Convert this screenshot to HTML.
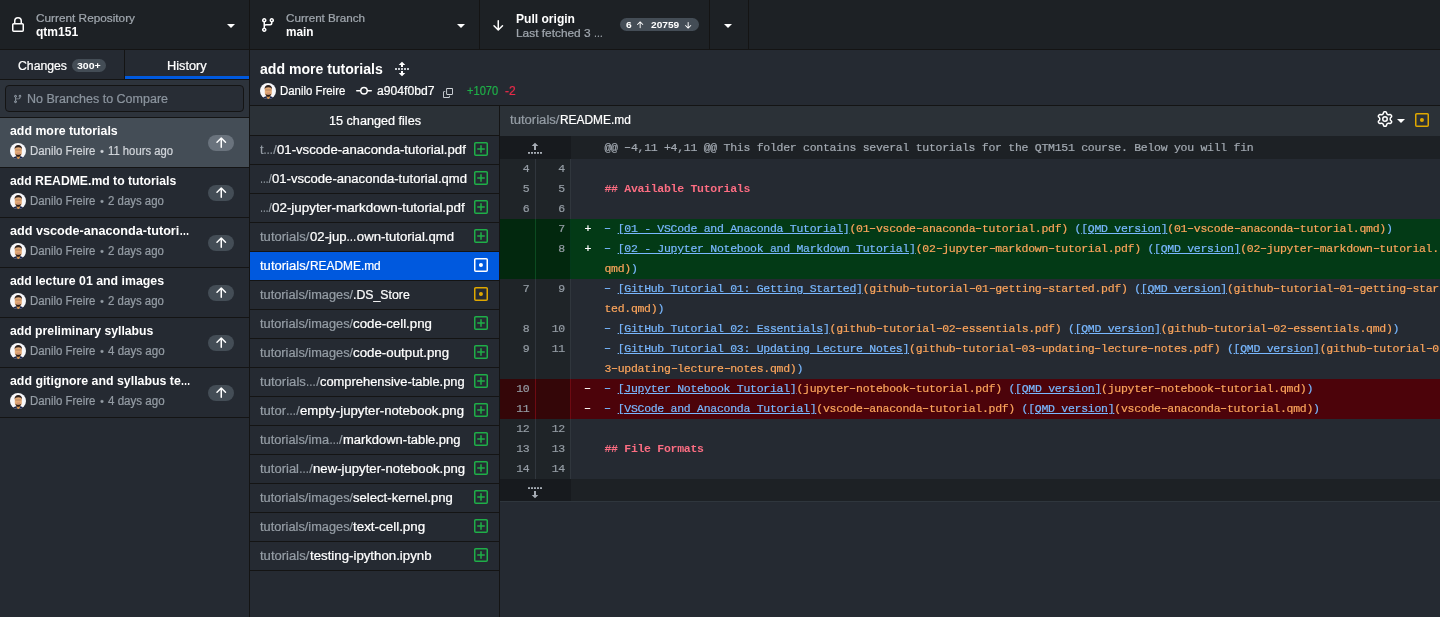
<!DOCTYPE html>
<html lang="en"><head><meta charset="utf-8"><title>GitHub Desktop</title>
<style>
html,body{margin:0;padding:0;background:#252a32;}
body{width:1440px;height:617px;overflow:hidden;position:relative;font-family:'Liberation Sans', sans-serif;}
#app{position:absolute;left:0;top:0;width:1440px;height:617px;will-change:transform;}
.r{position:absolute;display:block;}
.t{position:absolute;white-space:pre;-webkit-text-stroke:0.22px;}
.el{display:inline-block;transform:scaleX(0.78);transform-origin:0 50%;margin-right:-2.600px;}
.ln,.mk,.cd{position:absolute;white-space:pre;font:400 11.5px/20px 'Liberation Mono', monospace;letter-spacing:-0.279px;-webkit-text-stroke:0.2px;}
.ln{color:#959da5;text-align:right;}
.mk{color:#fff;}
.cd{color:#d1d5da;}
.lk{color:#79b8ff;text-decoration:underline;}
.st{color:#fca55c;}
.bl{color:#79b8ff;}
.hy{display:inline-block;transform:scaleX(1.600);position:relative;top:-1px;}
.hd{color:#fc6d82;font-weight:700;-webkit-text-stroke:0;}
</style></head>
<body>
<div id="app">
<div class="r" style="left:0px;top:0px;width:1440px;height:49px;background:#1d2125;"></div>
<div class="r" style="left:0px;top:49px;width:1440px;height:1px;background:#141414;"></div>
<div class="r" style="left:249px;top:0px;width:1px;height:49px;background:#141414;"></div>
<div class="r" style="left:479px;top:0px;width:1px;height:49px;background:#141414;"></div>
<div class="r" style="left:709px;top:0px;width:1px;height:49px;background:#141414;"></div>
<div class="r" style="left:748px;top:0px;width:1px;height:49px;background:#141414;"></div>
<div class="r" style="left:249px;top:50px;width:1px;height:567px;background:#141414;"></div>
<div class="r" style="left:124px;top:50px;width:1px;height:29px;background:#141414;"></div>
<div class="r" style="left:0px;top:79px;width:249px;height:1px;background:#141414;"></div>
<div class="r" style="left:125px;top:76px;width:124px;height:3px;background:#0059de;"></div>
<div class="r" style="left:0px;top:80px;width:249px;height:37px;background:#2d333b;"></div>
<div class="r" style="left:5px;top:85px;width:237px;height:25px;border:1px solid #141414;border-radius:4px;background:#282d35"></div>
<div class="r" style="left:0px;top:117px;width:249px;height:1px;background:#141414;"></div>
<div class="r" style="left:0px;top:118px;width:249px;height:49px;background:#444d56;"></div>
<div class="r" style="left:0px;top:167px;width:249px;height:1px;background:#141414;"></div>
<div class="r" style="left:208px;top:135px;width:26px;height:16px;border-radius:8px;background:#6a737d"></div>
<svg class="r" style="left:213.3px;top:135px" width="16" height="16" viewBox="0 0 16 16"><path fill="#fff" d="M3.47 7.78a.75.75 0 0 1 0-1.06l4.25-4.25a.75.75 0 0 1 1.06 0l4.25 4.25a.751.751 0 0 1-.018 1.042.751.751 0 0 1-1.042.018L9 4.81v7.44a.75.75 0 0 1-1.5 0V4.81L4.53 7.78a.75.75 0 0 1-1.06 0Z"/></svg>
<div class="r" style="left:0px;top:217px;width:249px;height:1px;background:#141414;"></div>
<div class="r" style="left:208px;top:185px;width:26px;height:16px;border-radius:8px;background:#444d56"></div>
<svg class="r" style="left:213.3px;top:185px" width="16" height="16" viewBox="0 0 16 16"><path fill="#fff" d="M3.47 7.78a.75.75 0 0 1 0-1.06l4.25-4.25a.75.75 0 0 1 1.06 0l4.25 4.25a.751.751 0 0 1-.018 1.042.751.751 0 0 1-1.042.018L9 4.81v7.44a.75.75 0 0 1-1.5 0V4.81L4.53 7.78a.75.75 0 0 1-1.06 0Z"/></svg>
<div class="r" style="left:0px;top:267px;width:249px;height:1px;background:#141414;"></div>
<div class="r" style="left:208px;top:235px;width:26px;height:16px;border-radius:8px;background:#444d56"></div>
<svg class="r" style="left:213.3px;top:235px" width="16" height="16" viewBox="0 0 16 16"><path fill="#fff" d="M3.47 7.78a.75.75 0 0 1 0-1.06l4.25-4.25a.75.75 0 0 1 1.06 0l4.25 4.25a.751.751 0 0 1-.018 1.042.751.751 0 0 1-1.042.018L9 4.81v7.44a.75.75 0 0 1-1.5 0V4.81L4.53 7.78a.75.75 0 0 1-1.06 0Z"/></svg>
<div class="r" style="left:0px;top:317px;width:249px;height:1px;background:#141414;"></div>
<div class="r" style="left:208px;top:285px;width:26px;height:16px;border-radius:8px;background:#444d56"></div>
<svg class="r" style="left:213.3px;top:285px" width="16" height="16" viewBox="0 0 16 16"><path fill="#fff" d="M3.47 7.78a.75.75 0 0 1 0-1.06l4.25-4.25a.75.75 0 0 1 1.06 0l4.25 4.25a.751.751 0 0 1-.018 1.042.751.751 0 0 1-1.042.018L9 4.81v7.44a.75.75 0 0 1-1.5 0V4.81L4.53 7.78a.75.75 0 0 1-1.06 0Z"/></svg>
<div class="r" style="left:0px;top:367px;width:249px;height:1px;background:#141414;"></div>
<div class="r" style="left:208px;top:335px;width:26px;height:16px;border-radius:8px;background:#444d56"></div>
<svg class="r" style="left:213.3px;top:335px" width="16" height="16" viewBox="0 0 16 16"><path fill="#fff" d="M3.47 7.78a.75.75 0 0 1 0-1.06l4.25-4.25a.75.75 0 0 1 1.06 0l4.25 4.25a.751.751 0 0 1-.018 1.042.751.751 0 0 1-1.042.018L9 4.81v7.44a.75.75 0 0 1-1.5 0V4.81L4.53 7.78a.75.75 0 0 1-1.06 0Z"/></svg>
<div class="r" style="left:0px;top:417px;width:249px;height:1px;background:#141414;"></div>
<div class="r" style="left:208px;top:385px;width:26px;height:16px;border-radius:8px;background:#444d56"></div>
<svg class="r" style="left:213.3px;top:385px" width="16" height="16" viewBox="0 0 16 16"><path fill="#fff" d="M3.47 7.78a.75.75 0 0 1 0-1.06l4.25-4.25a.75.75 0 0 1 1.06 0l4.25 4.25a.751.751 0 0 1-.018 1.042.751.751 0 0 1-1.042.018L9 4.81v7.44a.75.75 0 0 1-1.5 0V4.81L4.53 7.78a.75.75 0 0 1-1.06 0Z"/></svg>
<div class="r" style="left:250px;top:105px;width:1190px;height:1px;background:#141414;"></div>
<div class="r" style="left:499px;top:106px;width:1px;height:511px;background:#141414;"></div>
<div class="r" style="left:250px;top:106px;width:249px;height:29px;background:#2b3137;"></div>
<div class="r" style="left:250px;top:135px;width:249px;height:1px;background:#141414;"></div>
<div class="r" style="left:250px;top:164px;width:249px;height:1px;background:#141414;"></div>
<div class="r" style="left:250px;top:193px;width:249px;height:1px;background:#141414;"></div>
<div class="r" style="left:250px;top:222px;width:249px;height:1px;background:#141414;"></div>
<div class="r" style="left:250px;top:251px;width:249px;height:1px;background:#141414;"></div>
<div class="r" style="left:250px;top:252px;width:249px;height:28px;background:#0059de;"></div>
<div class="r" style="left:250px;top:280px;width:249px;height:1px;background:#141414;"></div>
<div class="r" style="left:250px;top:309px;width:249px;height:1px;background:#141414;"></div>
<div class="r" style="left:250px;top:338px;width:249px;height:1px;background:#141414;"></div>
<div class="r" style="left:250px;top:367px;width:249px;height:1px;background:#141414;"></div>
<div class="r" style="left:250px;top:396px;width:249px;height:1px;background:#141414;"></div>
<div class="r" style="left:250px;top:425px;width:249px;height:1px;background:#141414;"></div>
<div class="r" style="left:250px;top:454px;width:249px;height:1px;background:#141414;"></div>
<div class="r" style="left:250px;top:483px;width:249px;height:1px;background:#141414;"></div>
<div class="r" style="left:250px;top:512px;width:249px;height:1px;background:#141414;"></div>
<div class="r" style="left:250px;top:541px;width:249px;height:1px;background:#141414;"></div>
<div class="r" style="left:250px;top:570px;width:249px;height:1px;background:#141414;"></div>
<div class="r" style="left:500px;top:106px;width:940px;height:30px;background:#2b3137;"></div>
<div class="r" style="left:500px;top:136px;width:71px;height:23px;background:#171a1e;"></div>
<div class="r" style="left:571px;top:136px;width:869px;height:23px;background:#1d2125;"></div>
<div class="r" style="left:500px;top:159px;width:71px;height:20px;background:#1f2428;"></div>
<div class="r" style="left:500px;top:179px;width:71px;height:20px;background:#1f2428;"></div>
<div class="r" style="left:500px;top:199px;width:71px;height:20px;background:#1f2428;"></div>
<div class="r" style="left:500px;top:219px;width:71px;height:20px;background:#02280e;"></div>
<div class="r" style="left:571px;top:219px;width:869px;height:20px;background:#033a16;"></div>
<div class="r" style="left:500px;top:239px;width:71px;height:20px;background:#02280e;"></div>
<div class="r" style="left:571px;top:239px;width:869px;height:20px;background:#033a16;"></div>
<div class="r" style="left:500px;top:259px;width:71px;height:20px;background:#02280e;"></div>
<div class="r" style="left:571px;top:259px;width:869px;height:20px;background:#033a16;"></div>
<div class="r" style="left:500px;top:279px;width:71px;height:20px;background:#1f2428;"></div>
<div class="r" style="left:500px;top:299px;width:71px;height:20px;background:#1f2428;"></div>
<div class="r" style="left:500px;top:319px;width:71px;height:20px;background:#1f2428;"></div>
<div class="r" style="left:500px;top:339px;width:71px;height:20px;background:#1f2428;"></div>
<div class="r" style="left:500px;top:359px;width:71px;height:20px;background:#1f2428;"></div>
<div class="r" style="left:500px;top:379px;width:71px;height:20px;background:#340608;"></div>
<div class="r" style="left:571px;top:379px;width:869px;height:20px;background:#4c030a;"></div>
<div class="r" style="left:500px;top:399px;width:71px;height:20px;background:#340608;"></div>
<div class="r" style="left:571px;top:399px;width:869px;height:20px;background:#4c030a;"></div>
<div class="r" style="left:500px;top:419px;width:71px;height:20px;background:#1f2428;"></div>
<div class="r" style="left:500px;top:439px;width:71px;height:20px;background:#1f2428;"></div>
<div class="r" style="left:500px;top:459px;width:71px;height:20px;background:#1f2428;"></div>
<div class="r" style="left:535px;top:159px;width:1px;height:20px;background:#30363d;"></div>
<div class="r" style="left:570px;top:159px;width:1px;height:20px;background:#30363d;"></div>
<div class="r" style="left:535px;top:179px;width:1px;height:20px;background:#30363d;"></div>
<div class="r" style="left:570px;top:179px;width:1px;height:20px;background:#30363d;"></div>
<div class="r" style="left:535px;top:199px;width:1px;height:20px;background:#30363d;"></div>
<div class="r" style="left:570px;top:199px;width:1px;height:20px;background:#30363d;"></div>
<div class="r" style="left:535px;top:219px;width:1px;height:20px;background:#0b4a20;"></div>
<div class="r" style="left:570px;top:219px;width:1px;height:20px;background:#03391a;"></div>
<div class="r" style="left:535px;top:239px;width:1px;height:20px;background:#0b4a20;"></div>
<div class="r" style="left:570px;top:239px;width:1px;height:20px;background:#03391a;"></div>
<div class="r" style="left:535px;top:259px;width:1px;height:20px;background:#0b4a20;"></div>
<div class="r" style="left:570px;top:259px;width:1px;height:20px;background:#03391a;"></div>
<div class="r" style="left:535px;top:279px;width:1px;height:20px;background:#30363d;"></div>
<div class="r" style="left:570px;top:279px;width:1px;height:20px;background:#30363d;"></div>
<div class="r" style="left:535px;top:299px;width:1px;height:20px;background:#30363d;"></div>
<div class="r" style="left:570px;top:299px;width:1px;height:20px;background:#30363d;"></div>
<div class="r" style="left:535px;top:319px;width:1px;height:20px;background:#30363d;"></div>
<div class="r" style="left:570px;top:319px;width:1px;height:20px;background:#30363d;"></div>
<div class="r" style="left:535px;top:339px;width:1px;height:20px;background:#30363d;"></div>
<div class="r" style="left:570px;top:339px;width:1px;height:20px;background:#30363d;"></div>
<div class="r" style="left:535px;top:359px;width:1px;height:20px;background:#30363d;"></div>
<div class="r" style="left:570px;top:359px;width:1px;height:20px;background:#30363d;"></div>
<div class="r" style="left:535px;top:379px;width:1px;height:20px;background:#6e0a12;"></div>
<div class="r" style="left:570px;top:379px;width:1px;height:20px;background:#6e0a12;"></div>
<div class="r" style="left:535px;top:399px;width:1px;height:20px;background:#6e0a12;"></div>
<div class="r" style="left:570px;top:399px;width:1px;height:20px;background:#6e0a12;"></div>
<div class="r" style="left:535px;top:419px;width:1px;height:20px;background:#30363d;"></div>
<div class="r" style="left:570px;top:419px;width:1px;height:20px;background:#30363d;"></div>
<div class="r" style="left:535px;top:439px;width:1px;height:20px;background:#30363d;"></div>
<div class="r" style="left:570px;top:439px;width:1px;height:20px;background:#30363d;"></div>
<div class="r" style="left:535px;top:459px;width:1px;height:20px;background:#30363d;"></div>
<div class="r" style="left:570px;top:459px;width:1px;height:20px;background:#30363d;"></div>
<div class="r" style="left:500px;top:479px;width:71px;height:22px;background:#171a1e;"></div>
<div class="r" style="left:571px;top:479px;width:869px;height:22px;background:#1d2125;"></div>
<div class="r" style="left:500px;top:501px;width:940px;height:1px;background:#2f363d;"></div>
<div class="r" style="left:620px;top:18px;width:79px;height:13px;border-radius:7px;background:#444d56"></div>
<div class="r" style="left:72px;top:59px;width:34px;height:13px;border-radius:7px;background:#444d56"></div>
<svg class="r" style="left:10px;top:17px;" width="16" height="16" viewBox="0 0 16 16"><path fill="#fff" d="M4 4a4 4 0 0 1 8 0v2h.25c.966 0 1.75.784 1.75 1.75v5.5A1.75 1.75 0 0 1 12.25 15h-8.5A1.75 1.75 0 0 1 2 13.25v-5.5C2 6.784 2.784 6 3.75 6H4Zm8.25 3.5h-8.5a.25.25 0 0 0-.25.25v5.5c0 .138.112.25.25.25h8.5a.25.25 0 0 0 .25-.25v-5.5a.25.25 0 0 0-.25-.25ZM10.5 6V4a2.5 2.5 0 1 0-5 0v2Z"/></svg>
<svg class="r" style="left:260px;top:17px;" width="16" height="16" viewBox="0 0 16 16"><path fill="#fff" d="M9.5 3.25a2.25 2.25 0 1 1 3 2.122V6A2.5 2.5 0 0 1 10 8.5H6a1 1 0 0 0-1 1v1.128a2.251 2.251 0 1 1-1.5 0V5.372a2.25 2.25 0 1 1 1.5 0v1.836A2.493 2.493 0 0 1 6 7h4a1 1 0 0 0 1-1v-.628A2.25 2.25 0 0 1 9.5 3.25Zm-6 0a.75.75 0 1 0 1.5 0 .75.75 0 0 0-1.5 0Zm8.25-.75a.75.75 0 1 0 0 1.5.75.75 0 0 0 0-1.5ZM4.25 12a.75.75 0 1 0 0 1.5.75.75 0 0 0 0-1.5Z"/></svg>
<svg class="r" style="left:13px;top:93.5px;" width="9.5" height="10" viewBox="0 0 16 16"><path fill="#8b949e" d="M9.5 3.25a2.25 2.25 0 1 1 3 2.122V6A2.5 2.5 0 0 1 10 8.5H6a1 1 0 0 0-1 1v1.128a2.251 2.251 0 1 1-1.5 0V5.372a2.25 2.25 0 1 1 1.5 0v1.836A2.493 2.493 0 0 1 6 7h4a1 1 0 0 0 1-1v-.628A2.25 2.25 0 0 1 9.5 3.25Zm-6 0a.75.75 0 1 0 1.5 0 .75.75 0 0 0-1.5 0Zm8.25-.75a.75.75 0 1 0 0 1.5.75.75 0 0 0 0-1.5ZM4.25 12a.75.75 0 1 0 0 1.5.75.75 0 0 0 0-1.5Z"/></svg>
<div class="r" style="left:227px;top:24px;width:0;height:0;border-left:4px solid transparent;border-right:4px solid transparent;border-top:4.5px solid #fff"></div>
<div class="r" style="left:457px;top:24px;width:0;height:0;border-left:4px solid transparent;border-right:4px solid transparent;border-top:4.5px solid #fff"></div>
<div class="r" style="left:724px;top:24px;width:0;height:0;border-left:4px solid transparent;border-right:4px solid transparent;border-top:4.5px solid #fff"></div>
<svg class="r" style="left:490px;top:16.5px;" width="16" height="16" viewBox="0 0 16 16"><path fill="#fff" d="M13.03 8.22a.75.75 0 0 1 0 1.06l-4.25 4.25a.75.75 0 0 1-1.06 0L3.47 9.28a.751.751 0 0 1 .018-1.042.751.751 0 0 1 1.042-.018l2.97 2.97V3.75a.75.75 0 0 1 1.5 0v7.44l2.97-2.97a.75.75 0 0 1 1.06 0Z"/></svg>
<svg class="r" style="left:635.3px;top:19.5px;" width="10" height="10" viewBox="0 0 16 16"><path fill="#fff" d="M3.47 7.78a.75.75 0 0 1 0-1.06l4.25-4.25a.75.75 0 0 1 1.06 0l4.25 4.25a.751.751 0 0 1-.018 1.042.751.751 0 0 1-1.042.018L9 4.81v7.44a.75.75 0 0 1-1.5 0V4.81L4.53 7.78a.75.75 0 0 1-1.06 0Z"/></svg>
<svg class="r" style="left:683.3px;top:19.5px;" width="10" height="10" viewBox="0 0 16 16"><path fill="#fff" d="M13.03 8.22a.75.75 0 0 1 0 1.06l-4.25 4.25a.75.75 0 0 1-1.06 0L3.47 9.28a.751.751 0 0 1 .018-1.042.751.751 0 0 1 1.042-.018l2.97 2.97V3.75a.75.75 0 0 1 1.5 0v7.44l2.970-2.970a.75.75 0 0 1 1.060 0Z"/></svg>
<svg class="r" style="left:10px;top:143px;" width="16" height="16" viewBox="0 0 16 16"><defs><clipPath id="cp10_143"><circle cx="8" cy="8" r="8"/></clipPath><filter id="bl10_143" x="-10%" y="-10%" width="120%" height="120%"><feGaussianBlur stdDeviation="0.45"/></filter></defs>
<g clip-path="url(#cp10_143)"><rect width="16" height="16" fill="#f7f7fa"/><g filter="url(#bl10_143)">
<path d="M2.500 16.500 3.400 14.300 6.800 13 9.800 13 13.200 14.300 14 16.500Z" fill="#182048"/>
<path d="M6.700 12.500h3.200v2.300l-1.600 1.700-1.600-1.700Z" fill="#d9964f"/>
<rect x="4.800" y="3" width="7" height="10" rx="3.200" fill="#e3ab78"/>
<path d="M4.600 6.600C4.300 3.600 6 2.100 8.300 2.100s4 1.500 3.700 4.500c-.5-1.700-1.500-2.400-3.700-2.400s-3.200.700-3.700 2.400Z" fill="#2e211c"/>
<rect x="5.300" y="6.500" width="6" height="1" fill="#a9795a" opacity=".75"/>
<rect x="6.600" y="9.700" width="3.400" height=".9" fill="#c07a6a" opacity=".8"/>
<path d="M5.300 10.400c.5 2.400 1.700 3.400 3 3.400s2.500-1 3-3.400c-.8 1-1.700 1.300-3 1.300s-2.200-.3-3-1.300Z" fill="#2a1a14"/>
</g></g></svg>
<svg class="r" style="left:10px;top:193px;" width="16" height="16" viewBox="0 0 16 16"><defs><clipPath id="cp10_193"><circle cx="8" cy="8" r="8"/></clipPath><filter id="bl10_193" x="-10%" y="-10%" width="120%" height="120%"><feGaussianBlur stdDeviation="0.45"/></filter></defs>
<g clip-path="url(#cp10_193)"><rect width="16" height="16" fill="#f7f7fa"/><g filter="url(#bl10_193)">
<path d="M2.500 16.500 3.400 14.300 6.800 13 9.800 13 13.200 14.300 14 16.500Z" fill="#182048"/>
<path d="M6.700 12.500h3.200v2.300l-1.600 1.700-1.600-1.700Z" fill="#d9964f"/>
<rect x="4.800" y="3" width="7" height="10" rx="3.200" fill="#e3ab78"/>
<path d="M4.600 6.600C4.300 3.600 6 2.100 8.300 2.100s4 1.500 3.700 4.500c-.5-1.700-1.500-2.400-3.700-2.400s-3.200.700-3.700 2.400Z" fill="#2e211c"/>
<rect x="5.300" y="6.500" width="6" height="1" fill="#a9795a" opacity=".75"/>
<rect x="6.600" y="9.700" width="3.400" height=".9" fill="#c07a6a" opacity=".8"/>
<path d="M5.300 10.400c.5 2.400 1.700 3.400 3 3.400s2.500-1 3-3.400c-.8 1-1.700 1.300-3 1.300s-2.200-.3-3-1.300Z" fill="#2a1a14"/>
</g></g></svg>
<svg class="r" style="left:10px;top:243px;" width="16" height="16" viewBox="0 0 16 16"><defs><clipPath id="cp10_243"><circle cx="8" cy="8" r="8"/></clipPath><filter id="bl10_243" x="-10%" y="-10%" width="120%" height="120%"><feGaussianBlur stdDeviation="0.45"/></filter></defs>
<g clip-path="url(#cp10_243)"><rect width="16" height="16" fill="#f7f7fa"/><g filter="url(#bl10_243)">
<path d="M2.500 16.500 3.400 14.300 6.800 13 9.800 13 13.200 14.300 14 16.500Z" fill="#182048"/>
<path d="M6.700 12.500h3.200v2.300l-1.600 1.700-1.600-1.700Z" fill="#d9964f"/>
<rect x="4.800" y="3" width="7" height="10" rx="3.200" fill="#e3ab78"/>
<path d="M4.600 6.600C4.300 3.600 6 2.100 8.300 2.100s4 1.500 3.700 4.500c-.5-1.700-1.500-2.400-3.700-2.400s-3.200.700-3.700 2.400Z" fill="#2e211c"/>
<rect x="5.300" y="6.500" width="6" height="1" fill="#a9795a" opacity=".75"/>
<rect x="6.600" y="9.700" width="3.400" height=".9" fill="#c07a6a" opacity=".8"/>
<path d="M5.300 10.400c.5 2.400 1.700 3.400 3 3.400s2.500-1 3-3.400c-.8 1-1.700 1.300-3 1.300s-2.200-.3-3-1.300Z" fill="#2a1a14"/>
</g></g></svg>
<svg class="r" style="left:10px;top:293px;" width="16" height="16" viewBox="0 0 16 16"><defs><clipPath id="cp10_293"><circle cx="8" cy="8" r="8"/></clipPath><filter id="bl10_293" x="-10%" y="-10%" width="120%" height="120%"><feGaussianBlur stdDeviation="0.45"/></filter></defs>
<g clip-path="url(#cp10_293)"><rect width="16" height="16" fill="#f7f7fa"/><g filter="url(#bl10_293)">
<path d="M2.500 16.500 3.400 14.300 6.800 13 9.800 13 13.200 14.300 14 16.500Z" fill="#182048"/>
<path d="M6.700 12.500h3.200v2.300l-1.600 1.700-1.600-1.700Z" fill="#d9964f"/>
<rect x="4.800" y="3" width="7" height="10" rx="3.200" fill="#e3ab78"/>
<path d="M4.600 6.600C4.300 3.600 6 2.100 8.300 2.100s4 1.500 3.700 4.500c-.5-1.700-1.500-2.400-3.700-2.400s-3.200.700-3.700 2.400Z" fill="#2e211c"/>
<rect x="5.300" y="6.500" width="6" height="1" fill="#a9795a" opacity=".75"/>
<rect x="6.600" y="9.700" width="3.400" height=".9" fill="#c07a6a" opacity=".8"/>
<path d="M5.300 10.400c.5 2.400 1.700 3.400 3 3.400s2.500-1 3-3.400c-.8 1-1.700 1.300-3 1.300s-2.200-.3-3-1.300Z" fill="#2a1a14"/>
</g></g></svg>
<svg class="r" style="left:10px;top:343px;" width="16" height="16" viewBox="0 0 16 16"><defs><clipPath id="cp10_343"><circle cx="8" cy="8" r="8"/></clipPath><filter id="bl10_343" x="-10%" y="-10%" width="120%" height="120%"><feGaussianBlur stdDeviation="0.45"/></filter></defs>
<g clip-path="url(#cp10_343)"><rect width="16" height="16" fill="#f7f7fa"/><g filter="url(#bl10_343)">
<path d="M2.500 16.500 3.400 14.300 6.800 13 9.800 13 13.200 14.300 14 16.500Z" fill="#182048"/>
<path d="M6.700 12.500h3.200v2.300l-1.600 1.700-1.600-1.700Z" fill="#d9964f"/>
<rect x="4.800" y="3" width="7" height="10" rx="3.200" fill="#e3ab78"/>
<path d="M4.600 6.600C4.300 3.600 6 2.100 8.300 2.100s4 1.500 3.700 4.500c-.5-1.700-1.500-2.400-3.700-2.400s-3.200.700-3.700 2.400Z" fill="#2e211c"/>
<rect x="5.300" y="6.500" width="6" height="1" fill="#a9795a" opacity=".75"/>
<rect x="6.600" y="9.700" width="3.400" height=".9" fill="#c07a6a" opacity=".8"/>
<path d="M5.300 10.400c.5 2.400 1.700 3.400 3 3.400s2.500-1 3-3.400c-.8 1-1.700 1.300-3 1.300s-2.200-.3-3-1.300Z" fill="#2a1a14"/>
</g></g></svg>
<svg class="r" style="left:10px;top:393px;" width="16" height="16" viewBox="0 0 16 16"><defs><clipPath id="cp10_393"><circle cx="8" cy="8" r="8"/></clipPath><filter id="bl10_393" x="-10%" y="-10%" width="120%" height="120%"><feGaussianBlur stdDeviation="0.45"/></filter></defs>
<g clip-path="url(#cp10_393)"><rect width="16" height="16" fill="#f7f7fa"/><g filter="url(#bl10_393)">
<path d="M2.500 16.500 3.400 14.300 6.800 13 9.800 13 13.200 14.300 14 16.500Z" fill="#182048"/>
<path d="M6.700 12.500h3.200v2.300l-1.600 1.700-1.600-1.700Z" fill="#d9964f"/>
<rect x="4.800" y="3" width="7" height="10" rx="3.200" fill="#e3ab78"/>
<path d="M4.600 6.600C4.300 3.600 6 2.100 8.300 2.100s4 1.500 3.700 4.500c-.5-1.700-1.500-2.400-3.700-2.400s-3.200.700-3.700 2.400Z" fill="#2e211c"/>
<rect x="5.300" y="6.500" width="6" height="1" fill="#a9795a" opacity=".75"/>
<rect x="6.600" y="9.700" width="3.400" height=".9" fill="#c07a6a" opacity=".8"/>
<path d="M5.300 10.400c.5 2.400 1.700 3.400 3 3.400s2.500-1 3-3.400c-.8 1-1.700 1.300-3 1.300s-2.200-.3-3-1.300Z" fill="#2a1a14"/>
</g></g></svg>
<svg class="r" style="left:260px;top:83px;" width="16" height="16" viewBox="0 0 16 16"><defs><clipPath id="cp260_83"><circle cx="8" cy="8" r="8"/></clipPath><filter id="bl260_83" x="-10%" y="-10%" width="120%" height="120%"><feGaussianBlur stdDeviation="0.45"/></filter></defs>
<g clip-path="url(#cp260_83)"><rect width="16" height="16" fill="#f7f7fa"/><g filter="url(#bl260_83)">
<path d="M2.500 16.500 3.400 14.300 6.800 13 9.800 13 13.200 14.300 14 16.500Z" fill="#182048"/>
<path d="M6.700 12.500h3.200v2.300l-1.600 1.700-1.600-1.700Z" fill="#d9964f"/>
<rect x="4.800" y="3" width="7" height="10" rx="3.200" fill="#e3ab78"/>
<path d="M4.600 6.600C4.300 3.600 6 2.100 8.300 2.100s4 1.500 3.700 4.500c-.5-1.700-1.500-2.400-3.700-2.400s-3.200.700-3.700 2.400Z" fill="#2e211c"/>
<rect x="5.300" y="6.500" width="6" height="1" fill="#a9795a" opacity=".75"/>
<rect x="6.600" y="9.700" width="3.400" height=".9" fill="#c07a6a" opacity=".8"/>
<path d="M5.300 10.400c.5 2.400 1.700 3.400 3 3.400s2.500-1 3-3.400c-.8 1-1.700 1.300-3 1.300s-2.200-.3-3-1.300Z" fill="#2a1a14"/>
</g></g></svg>
<svg class="r" style="left:388px;top:56px;" width="30" height="26" viewBox="0 0 30 26"><g fill="#fff"><path d="M14 5.700 17.300 9 15 9 15 11 13 11 13 9 10.700 9Z"/><path d="M14 20.200 10.700 17 13 17 13 15 15 15 15 17 17.300 17Z"/></g><g fill="#c9cdd2"><rect x="7" y="12" width="2" height="2"/><rect x="10" y="12" width="2" height="2"/><rect x="13" y="12" width="2" height="2"/><rect x="16" y="12" width="2" height="2"/><rect x="19" y="12" width="2" height="2"/></g></svg>
<svg class="r" style="left:356px;top:83px;" width="16" height="16" viewBox="0 0 16 16"><path fill="#fff" d="M11.930 8.500a4.002 4.002 0 0 1-7.860 0H.75a.75.75 0 0 1 0-1.500h3.320a4.002 4.002 0 0 1 7.860 0h3.320a.75.75 0 0 1 0 1.500Zm-1.430-.75a2.500 2.500 0 1 0-5 0 2.500 2.500 0 0 0 5 0Z"/></svg>
<svg class="r" style="left:443px;top:87.8px;" width="10" height="10" viewBox="0 0 16 16"><path fill="#c6cbd1" d="M0 6.750C0 5.784.784 5 1.750 5h1.500a.75.75 0 0 1 0 1.500h-1.500a.25.25 0 0 0-.25.250v7.500c0 .138.112.250.250.250h7.500a.25.25 0 0 0 .250-.250v-1.500a.75.75 0 0 1 1.500 0v1.500A1.750 1.750 0 0 1 9.250 16h-7.500A1.750 1.750 0 0 1 0 14.250Z"/><path fill="#d1d5da" d="M5 1.750C5 .784 5.784 0 6.750 0h7.500C15.216 0 16 .784 16 1.750v7.500A1.750 1.750 0 0 1 14.250 11h-7.500A1.750 1.750 0 0 1 5 9.250Zm1.750-.250a.25.25 0 0 0-.250.250v7.500c0 .138.112.250.250.250h7.500a.25.25 0 0 0 .250-.250v-7.500a.25.25 0 0 0-.250-.250Z"/></svg>
<svg class="r" style="left:473px;top:141px;" width="16" height="16" viewBox="0 0 16 16"><path fill="#1fae48" d="M2.750 1h10.500c.966 0 1.750.784 1.750 1.750v10.500A1.750 1.750 0 0 1 13.250 15H2.750A1.750 1.750 0 0 1 1 13.250V2.750C1 1.784 1.784 1 2.750 1Zm10.500 1.500H2.750a.25.25 0 0 0-.250.250v10.500c0 .138.112.250.250.250h10.500a.25.250 0 0 0 .250-.250V2.750a.25.250 0 0 0-.250-.250ZM8 4a.75.750 0 0 1 .750.750v2.500h2.500a.75.750 0 0 1 0 1.500h-2.500v2.500a.75.750 0 0 1-1.500 0v-2.500h-2.500a.75.750 0 0 1 0-1.500h2.500v-2.500A.750.750 0 0 1 8 4Z"/></svg>
<svg class="r" style="left:473px;top:170px;" width="16" height="16" viewBox="0 0 16 16"><path fill="#1fae48" d="M2.750 1h10.500c.966 0 1.750.784 1.750 1.750v10.500A1.750 1.750 0 0 1 13.250 15H2.750A1.750 1.750 0 0 1 1 13.250V2.750C1 1.784 1.784 1 2.750 1Zm10.500 1.500H2.750a.25.25 0 0 0-.250.250v10.500c0 .138.112.250.250.250h10.500a.25.250 0 0 0 .250-.250V2.750a.25.250 0 0 0-.250-.250ZM8 4a.75.750 0 0 1 .750.750v2.500h2.500a.75.750 0 0 1 0 1.500h-2.500v2.500a.75.750 0 0 1-1.500 0v-2.500h-2.500a.75.750 0 0 1 0-1.500h2.500v-2.500A.750.750 0 0 1 8 4Z"/></svg>
<svg class="r" style="left:473px;top:199px;" width="16" height="16" viewBox="0 0 16 16"><path fill="#1fae48" d="M2.750 1h10.500c.966 0 1.750.784 1.750 1.750v10.500A1.750 1.750 0 0 1 13.250 15H2.750A1.750 1.750 0 0 1 1 13.250V2.750C1 1.784 1.784 1 2.750 1Zm10.500 1.500H2.750a.25.25 0 0 0-.250.250v10.500c0 .138.112.250.250.250h10.500a.25.250 0 0 0 .250-.250V2.750a.25.250 0 0 0-.250-.250ZM8 4a.75.750 0 0 1 .750.750v2.500h2.500a.75.750 0 0 1 0 1.500h-2.500v2.500a.75.750 0 0 1-1.500 0v-2.500h-2.500a.75.750 0 0 1 0-1.500h2.500v-2.500A.750.750 0 0 1 8 4Z"/></svg>
<svg class="r" style="left:473px;top:228px;" width="16" height="16" viewBox="0 0 16 16"><path fill="#1fae48" d="M2.750 1h10.500c.966 0 1.750.784 1.750 1.750v10.500A1.750 1.750 0 0 1 13.250 15H2.750A1.750 1.750 0 0 1 1 13.250V2.750C1 1.784 1.784 1 2.750 1Zm10.500 1.500H2.750a.25.25 0 0 0-.250.250v10.500c0 .138.112.250.250.250h10.500a.25.250 0 0 0 .250-.250V2.750a.25.250 0 0 0-.250-.250ZM8 4a.75.750 0 0 1 .750.750v2.500h2.500a.75.750 0 0 1 0 1.500h-2.500v2.500a.75.750 0 0 1-1.500 0v-2.500h-2.500a.75.750 0 0 1 0-1.500h2.500v-2.500A.750.750 0 0 1 8 4Z"/></svg>
<svg class="r" style="left:473px;top:257px;" width="16" height="16" viewBox="0 0 16 16"><path fill="#fff" d="M13.250 1c.966 0 1.750.784 1.750 1.750v10.500A1.750 1.750 0 0 1 13.250 15H2.750A1.750 1.750 0 0 1 1 13.250V2.750C1 1.784 1.784 1 2.750 1ZM2.750 2.500a.25.250 0 0 0-.250.250v10.500c0 .138.112.250.250.250h10.500a.25.250 0 0 0 .250-.250V2.750a.25.250 0 0 0-.250-.250ZM8 10a2 2 0 1 1-.001-3.999A2 2 0 0 1 8 10Z"/></svg>
<svg class="r" style="left:473px;top:286px;" width="16" height="16" viewBox="0 0 16 16"><path fill="#e0a800" d="M13.250 1c.966 0 1.750.784 1.750 1.750v10.500A1.750 1.750 0 0 1 13.250 15H2.750A1.750 1.750 0 0 1 1 13.250V2.750C1 1.784 1.784 1 2.750 1ZM2.750 2.500a.25.250 0 0 0-.250.250v10.500c0 .138.112.250.250.250h10.500a.25.250 0 0 0 .250-.250V2.750a.25.250 0 0 0-.250-.250ZM8 10a2 2 0 1 1-.001-3.999A2 2 0 0 1 8 10Z"/></svg>
<svg class="r" style="left:473px;top:315px;" width="16" height="16" viewBox="0 0 16 16"><path fill="#1fae48" d="M2.750 1h10.500c.966 0 1.750.784 1.750 1.750v10.500A1.750 1.750 0 0 1 13.250 15H2.750A1.750 1.750 0 0 1 1 13.250V2.750C1 1.784 1.784 1 2.750 1Zm10.500 1.500H2.750a.25.25 0 0 0-.250.250v10.500c0 .138.112.250.250.250h10.500a.25.250 0 0 0 .250-.250V2.750a.25.250 0 0 0-.250-.250ZM8 4a.75.750 0 0 1 .750.750v2.500h2.500a.75.750 0 0 1 0 1.500h-2.500v2.500a.75.750 0 0 1-1.500 0v-2.500h-2.500a.75.750 0 0 1 0-1.500h2.500v-2.500A.750.750 0 0 1 8 4Z"/></svg>
<svg class="r" style="left:473px;top:344px;" width="16" height="16" viewBox="0 0 16 16"><path fill="#1fae48" d="M2.750 1h10.500c.966 0 1.750.784 1.750 1.750v10.500A1.750 1.750 0 0 1 13.250 15H2.750A1.750 1.750 0 0 1 1 13.250V2.750C1 1.784 1.784 1 2.750 1Zm10.500 1.500H2.750a.25.25 0 0 0-.250.250v10.500c0 .138.112.250.250.250h10.500a.25.250 0 0 0 .250-.250V2.750a.25.250 0 0 0-.250-.250ZM8 4a.75.750 0 0 1 .750.750v2.500h2.500a.75.750 0 0 1 0 1.500h-2.500v2.500a.75.750 0 0 1-1.500 0v-2.500h-2.500a.75.750 0 0 1 0-1.500h2.500v-2.500A.750.750 0 0 1 8 4Z"/></svg>
<svg class="r" style="left:473px;top:373px;" width="16" height="16" viewBox="0 0 16 16"><path fill="#1fae48" d="M2.750 1h10.500c.966 0 1.750.784 1.750 1.750v10.500A1.750 1.750 0 0 1 13.250 15H2.750A1.750 1.750 0 0 1 1 13.250V2.750C1 1.784 1.784 1 2.750 1Zm10.500 1.500H2.750a.25.25 0 0 0-.250.250v10.500c0 .138.112.250.250.250h10.500a.25.250 0 0 0 .250-.250V2.750a.25.250 0 0 0-.250-.250ZM8 4a.75.750 0 0 1 .750.750v2.500h2.500a.75.750 0 0 1 0 1.500h-2.500v2.500a.75.750 0 0 1-1.500 0v-2.500h-2.500a.75.750 0 0 1 0-1.500h2.500v-2.500A.750.750 0 0 1 8 4Z"/></svg>
<svg class="r" style="left:473px;top:402px;" width="16" height="16" viewBox="0 0 16 16"><path fill="#1fae48" d="M2.750 1h10.500c.966 0 1.750.784 1.750 1.750v10.500A1.750 1.750 0 0 1 13.250 15H2.750A1.750 1.750 0 0 1 1 13.250V2.750C1 1.784 1.784 1 2.750 1Zm10.500 1.500H2.750a.25.25 0 0 0-.250.250v10.500c0 .138.112.250.250.250h10.500a.25.250 0 0 0 .250-.250V2.750a.25.250 0 0 0-.250-.250ZM8 4a.75.750 0 0 1 .750.750v2.500h2.500a.75.750 0 0 1 0 1.500h-2.500v2.500a.75.750 0 0 1-1.500 0v-2.500h-2.500a.75.750 0 0 1 0-1.500h2.500v-2.500A.750.750 0 0 1 8 4Z"/></svg>
<svg class="r" style="left:473px;top:431px;" width="16" height="16" viewBox="0 0 16 16"><path fill="#1fae48" d="M2.750 1h10.500c.966 0 1.750.784 1.750 1.750v10.500A1.750 1.750 0 0 1 13.250 15H2.750A1.750 1.750 0 0 1 1 13.250V2.750C1 1.784 1.784 1 2.750 1Zm10.500 1.500H2.750a.25.25 0 0 0-.250.250v10.500c0 .138.112.250.250.250h10.500a.25.250 0 0 0 .250-.250V2.750a.25.250 0 0 0-.250-.250ZM8 4a.75.750 0 0 1 .750.750v2.500h2.500a.75.750 0 0 1 0 1.500h-2.500v2.500a.75.750 0 0 1-1.500 0v-2.500h-2.500a.75.750 0 0 1 0-1.500h2.500v-2.500A.750.750 0 0 1 8 4Z"/></svg>
<svg class="r" style="left:473px;top:460px;" width="16" height="16" viewBox="0 0 16 16"><path fill="#1fae48" d="M2.750 1h10.500c.966 0 1.750.784 1.750 1.750v10.500A1.750 1.750 0 0 1 13.250 15H2.750A1.750 1.750 0 0 1 1 13.250V2.750C1 1.784 1.784 1 2.750 1Zm10.500 1.500H2.750a.25.25 0 0 0-.250.250v10.500c0 .138.112.250.250.250h10.500a.25.250 0 0 0 .250-.250V2.750a.25.250 0 0 0-.250-.250ZM8 4a.75.750 0 0 1 .750.750v2.500h2.500a.75.750 0 0 1 0 1.500h-2.500v2.500a.75.750 0 0 1-1.500 0v-2.500h-2.500a.75.750 0 0 1 0-1.500h2.500v-2.500A.750.750 0 0 1 8 4Z"/></svg>
<svg class="r" style="left:473px;top:489px;" width="16" height="16" viewBox="0 0 16 16"><path fill="#1fae48" d="M2.750 1h10.500c.966 0 1.750.784 1.750 1.750v10.500A1.750 1.750 0 0 1 13.250 15H2.750A1.750 1.750 0 0 1 1 13.250V2.750C1 1.784 1.784 1 2.750 1Zm10.500 1.500H2.750a.25.25 0 0 0-.250.250v10.500c0 .138.112.250.250.250h10.500a.25.250 0 0 0 .250-.250V2.750a.25.250 0 0 0-.250-.250ZM8 4a.75.750 0 0 1 .750.750v2.500h2.500a.75.750 0 0 1 0 1.500h-2.500v2.500a.75.750 0 0 1-1.500 0v-2.500h-2.500a.75.750 0 0 1 0-1.500h2.500v-2.500A.750.750 0 0 1 8 4Z"/></svg>
<svg class="r" style="left:473px;top:518px;" width="16" height="16" viewBox="0 0 16 16"><path fill="#1fae48" d="M2.750 1h10.500c.966 0 1.750.784 1.750 1.750v10.500A1.750 1.750 0 0 1 13.250 15H2.750A1.750 1.750 0 0 1 1 13.250V2.750C1 1.784 1.784 1 2.750 1Zm10.500 1.500H2.750a.25.25 0 0 0-.250.250v10.500c0 .138.112.250.250.250h10.500a.25.250 0 0 0 .250-.250V2.750a.25.250 0 0 0-.250-.250ZM8 4a.75.750 0 0 1 .750.750v2.500h2.500a.75.750 0 0 1 0 1.500h-2.500v2.500a.75.750 0 0 1-1.500 0v-2.500h-2.500a.75.750 0 0 1 0-1.500h2.500v-2.500A.750.750 0 0 1 8 4Z"/></svg>
<svg class="r" style="left:473px;top:547px;" width="16" height="16" viewBox="0 0 16 16"><path fill="#1fae48" d="M2.750 1h10.500c.966 0 1.750.784 1.750 1.750v10.500A1.750 1.750 0 0 1 13.250 15H2.750A1.750 1.750 0 0 1 1 13.250V2.750C1 1.784 1.784 1 2.750 1Zm10.500 1.500H2.750a.25.25 0 0 0-.250.250v10.500c0 .138.112.250.250.250h10.500a.25.250 0 0 0 .250-.250V2.750a.25.250 0 0 0-.250-.250ZM8 4a.75.750 0 0 1 .750.750v2.500h2.500a.75.750 0 0 1 0 1.500h-2.500v2.500a.75.750 0 0 1-1.500 0v-2.500h-2.500a.75.750 0 0 1 0-1.500h2.500v-2.500A.750.750 0 0 1 8 4Z"/></svg>
<svg class="r" style="left:1377px;top:110.5px;" width="16" height="16" viewBox="0 0 16 16"><path fill="#fff" d="M8 0a8.200 8.200 0 0 1 .701.031C9.444.095 9.990.645 10.160 1.290l.288 1.107c.018.066.079.158.212.224.231.114.454.243.668.386.123.082.233.090.299.071l1.103-.303c.644-.176 1.392.021 1.820.630.270.385.506.792.704 1.218.315.675.111 1.422-.364 1.891l-.814.806c-.049.048-.098.147-.088.294.016.257.016.515 0 .772-.010.147.038.246.088.294l.814.806c.475.469.679 1.216.364 1.891a7.977 7.977 0 0 1-.704 1.217c-.428.610-1.176.807-1.820.630l-1.102-.302c-.067-.019-.177-.011-.300.071a5.909 5.909 0 0 1-.668.386c-.133.066-.194.158-.211.224l-.290 1.106c-.168.646-.715 1.196-1.458 1.260a8.006 8.006 0 0 1-1.402 0c-.743-.064-1.289-.614-1.458-1.260l-.289-1.106c-.018-.066-.079-.158-.212-.224a5.738 5.738 0 0 1-.668-.386c-.123-.082-.233-.090-.299-.071l-1.103.303c-.644.176-1.392-.021-1.820-.630a8.120 8.120 0 0 1-.704-1.218c-.315-.675-.111-1.422.363-1.891l.815-.806c.050-.048.098-.147.088-.294a6.214 6.214 0 0 1 0-.772c.010-.147-.038-.246-.088-.294l-.815-.806C.635 6.045.431 5.298.746 4.623a7.920 7.920 0 0 1 .704-1.217c.428-.610 1.176-.807 1.820-.630l1.102.302c.067.019.177.011.300-.071.214-.143.437-.272.668-.386.133-.066.194-.158.211-.224l.290-1.106C6.009.645 6.556.095 7.299.030 7.530.010 7.764 0 8 0Zm-.571 1.525c-.036.003-.108.036-.137.146l-.289 1.105c-.147.561-.549.967-.998 1.189-.173.086-.340.183-.500.290-.417.278-.970.423-1.529.270l-1.103-.303c-.109-.030-.175.016-.195.045-.220.312-.412.644-.573.990-.014.031-.021.110.059.190l.815.806c.411.406.562.957.530 1.456a4.709 4.709 0 0 0 0 .582c.032.499-.119 1.050-.530 1.456l-.815.806c-.081.080-.073.159-.059.190.162.346.353.677.573.989.020.030.085.076.195.046l1.102-.303c.560-.153 1.113-.008 1.530.270.161.107.328.204.501.290.447.222.850.629.997 1.189l.289 1.105c.029.109.101.143.137.146a6.600 6.600 0 0 0 1.142 0c.036-.003.108-.036.137-.146l.289-1.105c.147-.561.549-.967.998-1.189.173-.086.340-.183.500-.290.417-.278.970-.423 1.529-.270l1.103.303c.109.029.175-.016.195-.045.220-.313.411-.644.573-.990.014-.031.021-.110-.059-.190l-.815-.806c-.411-.406-.562-.957-.530-1.456a4.709 4.709 0 0 0 0-.582c-.032-.499.119-1.050.530-1.456l.815-.806c.081-.080.073-.159.059-.190a6.464 6.464 0 0 0-.573-.989c-.020-.030-.085-.076-.195-.046l-1.102.303c-.560.153-1.113.008-1.530-.270a4.440 4.440 0 0 0-.501-.290c-.447-.222-.850-.629-.997-1.189l-.289-1.105c-.029-.110-.101-.143-.137-.146a6.600 6.600 0 0 0-1.142 0ZM11 8a3 3 0 1 1-6 0 3 3 0 0 1 6 0ZM9.500 8a1.500 1.500 0 1 0-3.001.001A1.500 1.500 0 0 0 9.500 8Z"/></svg>
<div class="r" style="left:1397px;top:119px;width:0;height:0;border-left:4px solid transparent;border-right:4px solid transparent;border-top:4px solid #fff"></div>
<svg class="r" style="left:1414px;top:111.5px;" width="16" height="16" viewBox="0 0 16 16"><path fill="#e0a800" d="M13.250 1c.966 0 1.750.784 1.750 1.750v10.500A1.750 1.750 0 0 1 13.250 15H2.750A1.750 1.750 0 0 1 1 13.250V2.750C1 1.784 1.784 1 2.750 1ZM2.750 2.500a.25.250 0 0 0-.250.250v10.500c0 .138.112.250.250.250h10.500a.25.250 0 0 0 .250-.250V2.750a.25.250 0 0 0-.250-.250ZM8 10a2 2 0 1 1-.001-3.999A2 2 0 0 1 8 10Z"/></svg>
<svg class="r" style="left:520px;top:138px;" width="30" height="20" viewBox="0 0 30 20"><path fill="#a6acb4" d="M15 4.800 18.300 8 16 8 16 12 14 12 14 8 11.700 8Z"/><rect x="8" y="14" width="2" height="1.800" fill="#a6acb4"/><rect x="11" y="14" width="2" height="1.800" fill="#a6acb4"/><rect x="14" y="14" width="2" height="1.800" fill="#a6acb4"/><rect x="17" y="14" width="2" height="1.800" fill="#a6acb4"/><rect x="20" y="14" width="2" height="1.800" fill="#a6acb4"/></svg>
<svg class="r" style="left:520px;top:481px;" width="30" height="20" viewBox="0 0 30 20"><rect x="8" y="6.2" width="2" height="1.800" fill="#a6acb4"/><rect x="11" y="6.2" width="2" height="1.800" fill="#a6acb4"/><rect x="14" y="6.2" width="2" height="1.800" fill="#a6acb4"/><rect x="17" y="6.2" width="2" height="1.800" fill="#a6acb4"/><rect x="20" y="6.2" width="2" height="1.800" fill="#a6acb4"/><path fill="#a6acb4" d="M15 17.300 11.700 14 14 14 14 10 16 10 16 14 18.300 14Z"/></svg>
<span class="t" id="t_repo_l" style="left:35.7px;top:10.36px;font:400 11px/16px 'Liberation Sans', sans-serif;color:#a0a7ae;transform:scaleX(1.0723);transform-origin:0 0;">Current Repository</span>
<span class="t" id="t_repo" style="left:36.3px;top:24.03px;font:700 12px/16px 'Liberation Sans', sans-serif;color:#ffffff;transform:scaleX(1.0040);transform-origin:0 0;-webkit-text-stroke:0;">qtm151</span>
<span class="t" id="t_br_l" style="left:286px;top:10.36px;font:400 11px/16px 'Liberation Sans', sans-serif;color:#a0a7ae;transform:scaleX(1.0591);transform-origin:0 0;">Current Branch</span>
<span class="t" id="t_br" style="left:286px;top:24.03px;font:700 12px/16px 'Liberation Sans', sans-serif;color:#ffffff;transform:scaleX(0.9816);transform-origin:0 0;-webkit-text-stroke:0;">main</span>
<span class="t" id="t_pull" style="left:516.3px;top:10.53px;font:700 12px/16px 'Liberation Sans', sans-serif;color:#ffffff;transform:scaleX(1.0056);transform-origin:0 0;-webkit-text-stroke:0;">Pull origin</span>
<span class="t" id="t_pull_l" style="left:516.3px;top:24.86px;font:400 11px/16px 'Liberation Sans', sans-serif;color:#a0a7ae;transform:scaleX(1.0797);transform-origin:0 0;">Last fetched 3 <span class="el">…</span></span>
<span class="t" id="t_pill6" style="left:625.8px;top:16.86px;font:700 9.5px/16px 'Liberation Sans', sans-serif;color:#ffffff;transform:scaleX(1.0761);transform-origin:0 0;-webkit-text-stroke:0;">6</span>
<span class="t" id="t_pilln" style="left:650.8px;top:16.86px;font:700 9.5px/16px 'Liberation Sans', sans-serif;color:#ffffff;transform:scaleX(1.0673);transform-origin:0 0;-webkit-text-stroke:0;">20759</span>
<span class="t" id="t_changes" style="left:18px;top:57.73px;font:400 12px/16px 'Liberation Sans', sans-serif;color:#ffffff;transform:scaleX(1.0198);transform-origin:0 0;">Changes</span>
<span class="t" id="t_300" style="left:76.7px;top:57.76px;font:700 9.5px/16px 'Liberation Sans', sans-serif;color:#ffffff;transform:scaleX(1.1118);transform-origin:0 0;-webkit-text-stroke:0;">300+</span>
<span class="t" id="t_history" style="left:167px;top:57.73px;font:400 12px/16px 'Liberation Sans', sans-serif;color:#ffffff;transform:scaleX(1.0631);transform-origin:0 0;">History</span>
<span class="t" id="t_nob" style="left:27.4px;top:91.23px;font:400 12px/16px 'Liberation Sans', sans-serif;color:#8b949e;transform:scaleX(1.0413);transform-origin:0 0;">No Branches to Compare</span>
<span class="t" id="t_c0a" style="left:10.3px;top:123.13px;font:700 12px/16px 'Liberation Sans', sans-serif;color:#ffffff;transform:scaleX(1.0288);transform-origin:0 0;-webkit-text-stroke:0;">add more tutorials</span>
<span class="t" id="t_c0b" style="left:30.3px;top:143.33px;font:400 12px/16px 'Liberation Sans', sans-serif;color:#d1d5da;transform:scaleX(0.9519);transform-origin:0 0;">Danilo Freire</span>
<span class="t" id="t_c0d" style="left:100.2px;top:143.50px;font:400 10px/16px 'Liberation Sans', sans-serif;color:#d1d5da;">•</span>
<span class="t" id="t_c0e" style="left:108px;top:143.33px;font:400 12px/16px 'Liberation Sans', sans-serif;color:#d1d5da;transform:scaleX(0.9397);transform-origin:0 0;">11 hours ago</span>
<span class="t" id="t_c1a" style="left:10.3px;top:173.13px;font:700 12px/16px 'Liberation Sans', sans-serif;color:#ffffff;transform:scaleX(1.0175);transform-origin:0 0;-webkit-text-stroke:0;">add README.md to tutorials</span>
<span class="t" id="t_c1b" style="left:30.3px;top:193.33px;font:400 12px/16px 'Liberation Sans', sans-serif;color:#959da5;transform:scaleX(0.9519);transform-origin:0 0;">Danilo Freire</span>
<span class="t" id="t_c1d" style="left:100.2px;top:193.50px;font:400 10px/16px 'Liberation Sans', sans-serif;color:#959da5;">•</span>
<span class="t" id="t_c1e" style="left:108px;top:193.33px;font:400 12px/16px 'Liberation Sans', sans-serif;color:#959da5;transform:scaleX(0.9520);transform-origin:0 0;">2 days ago</span>
<span class="t" id="t_c2a" style="left:10.3px;top:223.13px;font:700 12px/16px 'Liberation Sans', sans-serif;color:#ffffff;transform:scaleX(1.0535);transform-origin:0 0;-webkit-text-stroke:0;">add vscode-anaconda-tutori<span class="el">…</span></span>
<span class="t" id="t_c2b" style="left:30.3px;top:243.33px;font:400 12px/16px 'Liberation Sans', sans-serif;color:#959da5;transform:scaleX(0.9519);transform-origin:0 0;">Danilo Freire</span>
<span class="t" id="t_c2d" style="left:100.2px;top:243.50px;font:400 10px/16px 'Liberation Sans', sans-serif;color:#959da5;">•</span>
<span class="t" id="t_c2e" style="left:108px;top:243.33px;font:400 12px/16px 'Liberation Sans', sans-serif;color:#959da5;transform:scaleX(0.9520);transform-origin:0 0;">2 days ago</span>
<span class="t" id="t_c3a" style="left:10.3px;top:273.13px;font:700 12px/16px 'Liberation Sans', sans-serif;color:#ffffff;transform:scaleX(1.0262);transform-origin:0 0;-webkit-text-stroke:0;">add lecture 01 and images</span>
<span class="t" id="t_c3b" style="left:30.3px;top:293.33px;font:400 12px/16px 'Liberation Sans', sans-serif;color:#959da5;transform:scaleX(0.9519);transform-origin:0 0;">Danilo Freire</span>
<span class="t" id="t_c3d" style="left:100.2px;top:293.50px;font:400 10px/16px 'Liberation Sans', sans-serif;color:#959da5;">•</span>
<span class="t" id="t_c3e" style="left:108px;top:293.33px;font:400 12px/16px 'Liberation Sans', sans-serif;color:#959da5;transform:scaleX(0.9520);transform-origin:0 0;">2 days ago</span>
<span class="t" id="t_c4a" style="left:10.3px;top:323.13px;font:700 12px/16px 'Liberation Sans', sans-serif;color:#ffffff;transform:scaleX(1.0183);transform-origin:0 0;-webkit-text-stroke:0;">add preliminary syllabus</span>
<span class="t" id="t_c4b" style="left:30.3px;top:343.33px;font:400 12px/16px 'Liberation Sans', sans-serif;color:#959da5;transform:scaleX(0.9519);transform-origin:0 0;">Danilo Freire</span>
<span class="t" id="t_c4d" style="left:100.2px;top:343.50px;font:400 10px/16px 'Liberation Sans', sans-serif;color:#959da5;">•</span>
<span class="t" id="t_c4e" style="left:108px;top:343.33px;font:400 12px/16px 'Liberation Sans', sans-serif;color:#959da5;transform:scaleX(0.9656);transform-origin:0 0;">4 days ago</span>
<span class="t" id="t_c5a" style="left:10.3px;top:373.13px;font:700 12px/16px 'Liberation Sans', sans-serif;color:#ffffff;transform:scaleX(1.0289);transform-origin:0 0;-webkit-text-stroke:0;">add gitignore and syllabus te<span class="el">…</span></span>
<span class="t" id="t_c5b" style="left:30.3px;top:393.33px;font:400 12px/16px 'Liberation Sans', sans-serif;color:#959da5;transform:scaleX(0.9519);transform-origin:0 0;">Danilo Freire</span>
<span class="t" id="t_c5d" style="left:100.2px;top:393.50px;font:400 10px/16px 'Liberation Sans', sans-serif;color:#959da5;">•</span>
<span class="t" id="t_c5e" style="left:108px;top:393.33px;font:400 12px/16px 'Liberation Sans', sans-serif;color:#959da5;transform:scaleX(0.9656);transform-origin:0 0;">4 days ago</span>
<span class="t" id="t_sum" style="left:260.2px;top:61.07px;font:700 14px/16px 'Liberation Sans', sans-serif;color:#ffffff;transform:scaleX(1.0054);transform-origin:0 0;-webkit-text-stroke:0;">add more tutorials</span>
<span class="t" id="t_auth" style="left:280.4px;top:83.23px;font:400 12px/16px 'Liberation Sans', sans-serif;color:#ffffff;transform:scaleX(0.9505);transform-origin:0 0;">Danilo Freire</span>
<span class="t" id="t_sha" style="left:377.2px;top:83.23px;font:400 12px/16px 'Liberation Sans', sans-serif;color:#ffffff;transform:scaleX(1.0117);transform-origin:0 0;">a904f0bd7</span>
<span class="t" id="t_plus" style="left:466.7px;top:83.23px;font:400 12px/16px 'Liberation Sans', sans-serif;color:#1fae48;transform:scaleX(0.9228);transform-origin:0 0;">+1070</span>
<span class="t" id="t_minus" style="left:504.6px;top:83.23px;font:400 12px/16px 'Liberation Sans', sans-serif;color:#e82a48;transform:scaleX(1.0026);transform-origin:0 0;">-2</span>
<span class="t" id="t_15" style="left:328.5px;top:112.83px;font:400 12px/16px 'Liberation Sans', sans-serif;color:#ffffff;transform:scaleX(1.0526);transform-origin:0 0;">15 changed files</span>
<span class="t" id="t_f0g" style="left:260.2px;top:141.83px;font:400 12px/16px 'Liberation Sans', sans-serif;color:#959da5;transform:scaleX(1.0439);transform-origin:0 0;">t<span class="el">…</span>/</span>
<span class="t" id="t_f0" style="left:277px;top:141.83px;font:400 12px/16px 'Liberation Sans', sans-serif;color:#ffffff;transform:scaleX(1.0970);transform-origin:0 0;">01-vscode-anaconda-tutorial.pdf</span>
<span class="t" id="t_f1g" style="left:260.2px;top:170.83px;font:400 12px/16px 'Liberation Sans', sans-serif;color:#959da5;transform:scaleX(0.9255);transform-origin:0 0;"><span class="el">…</span>/</span>
<span class="t" id="t_f1" style="left:272px;top:170.83px;font:400 12px/16px 'Liberation Sans', sans-serif;color:#ffffff;transform:scaleX(1.0907);transform-origin:0 0;">01-vscode-anaconda-tutorial.qmd</span>
<span class="t" id="t_f2g" style="left:260.2px;top:199.83px;font:400 12px/16px 'Liberation Sans', sans-serif;color:#959da5;transform:scaleX(0.9255);transform-origin:0 0;"><span class="el">…</span>/</span>
<span class="t" id="t_f2" style="left:272px;top:199.83px;font:400 12px/16px 'Liberation Sans', sans-serif;color:#ffffff;transform:scaleX(1.1155);transform-origin:0 0;">02-jupyter-markdown-tutorial.pdf</span>
<span class="t" id="t_f3g" style="left:260.2px;top:228.83px;font:400 12px/16px 'Liberation Sans', sans-serif;color:#959da5;transform:scaleX(1.0869);transform-origin:0 0;">tutorials/</span>
<span class="t" id="t_f3" style="left:309.5px;top:228.83px;font:400 12px/16px 'Liberation Sans', sans-serif;color:#ffffff;transform:scaleX(1.0959);transform-origin:0 0;">02-jup<span class="el">…</span>own-tutorial.qmd</span>
<span class="t" id="t_f4g" style="left:260.2px;top:257.83px;font:400 12px/16px 'Liberation Sans', sans-serif;color:#ffffff;transform:scaleX(1.0869);transform-origin:0 0;">tutorials/</span>
<span class="t" id="t_f4" style="left:309.5px;top:257.83px;font:400 12px/16px 'Liberation Sans', sans-serif;color:#ffffff;transform:scaleX(0.9910);transform-origin:0 0;">README.md</span>
<span class="t" id="t_f5g" style="left:260.2px;top:286.83px;font:400 12px/16px 'Liberation Sans', sans-serif;color:#959da5;transform:scaleX(1.0655);transform-origin:0 0;">tutorials/images/</span>
<span class="t" id="t_f5" style="left:353.3px;top:286.83px;font:400 12px/16px 'Liberation Sans', sans-serif;color:#ffffff;transform:scaleX(1.0260);transform-origin:0 0;">.DS_Store</span>
<span class="t" id="t_f6g" style="left:260.2px;top:315.83px;font:400 12px/16px 'Liberation Sans', sans-serif;color:#959da5;transform:scaleX(1.0655);transform-origin:0 0;">tutorials/images/</span>
<span class="t" id="t_f6" style="left:353.3px;top:315.83px;font:400 12px/16px 'Liberation Sans', sans-serif;color:#ffffff;transform:scaleX(1.1052);transform-origin:0 0;">code-cell.png</span>
<span class="t" id="t_f7g" style="left:260.2px;top:344.83px;font:400 12px/16px 'Liberation Sans', sans-serif;color:#959da5;transform:scaleX(1.0655);transform-origin:0 0;">tutorials/images/</span>
<span class="t" id="t_f7" style="left:353.3px;top:344.83px;font:400 12px/16px 'Liberation Sans', sans-serif;color:#ffffff;transform:scaleX(1.1078);transform-origin:0 0;">code-output.png</span>
<span class="t" id="t_f8g" style="left:260.2px;top:373.83px;font:400 12px/16px 'Liberation Sans', sans-serif;color:#959da5;transform:scaleX(1.0916);transform-origin:0 0;">tutorials<span class="el">…</span>/</span>
<span class="t" id="t_f8" style="left:320px;top:373.83px;font:400 12px/16px 'Liberation Sans', sans-serif;color:#ffffff;transform:scaleX(1.0738);transform-origin:0 0;">comprehensive-table.png</span>
<span class="t" id="t_f9g" style="left:260.2px;top:402.83px;font:400 12px/16px 'Liberation Sans', sans-serif;color:#959da5;transform:scaleX(1.0825);transform-origin:0 0;">tutor<span class="el">…</span>/</span>
<span class="t" id="t_f9" style="left:300px;top:402.83px;font:400 12px/16px 'Liberation Sans', sans-serif;color:#ffffff;transform:scaleX(1.0976);transform-origin:0 0;">empty-jupyter-notebook.png</span>
<span class="t" id="t_f10g" style="left:260.2px;top:431.83px;font:400 12px/16px 'Liberation Sans', sans-serif;color:#959da5;transform:scaleX(1.0667);transform-origin:0 0;">tutorials/ima<span class="el">…</span>/</span>
<span class="t" id="t_f10" style="left:342.8px;top:431.83px;font:400 12px/16px 'Liberation Sans', sans-serif;color:#ffffff;transform:scaleX(1.0806);transform-origin:0 0;">markdown-table.png</span>
<span class="t" id="t_f11g" style="left:260.2px;top:460.83px;font:400 12px/16px 'Liberation Sans', sans-serif;color:#959da5;transform:scaleX(1.0824);transform-origin:0 0;">tutorial<span class="el">…</span>/</span>
<span class="t" id="t_f11" style="left:313px;top:460.83px;font:400 12px/16px 'Liberation Sans', sans-serif;color:#ffffff;transform:scaleX(1.0968);transform-origin:0 0;">new-jupyter-notebook.png</span>
<span class="t" id="t_f12g" style="left:260.2px;top:489.83px;font:400 12px/16px 'Liberation Sans', sans-serif;color:#959da5;transform:scaleX(1.0655);transform-origin:0 0;">tutorials/images/</span>
<span class="t" id="t_f12" style="left:353.3px;top:489.83px;font:400 12px/16px 'Liberation Sans', sans-serif;color:#ffffff;transform:scaleX(1.0931);transform-origin:0 0;">select-kernel.png</span>
<span class="t" id="t_f13g" style="left:260.2px;top:518.83px;font:400 12px/16px 'Liberation Sans', sans-serif;color:#959da5;transform:scaleX(1.0655);transform-origin:0 0;">tutorials/images/</span>
<span class="t" id="t_f13" style="left:353.3px;top:518.83px;font:400 12px/16px 'Liberation Sans', sans-serif;color:#ffffff;transform:scaleX(1.1159);transform-origin:0 0;">text-cell.png</span>
<span class="t" id="t_f14g" style="left:260.2px;top:547.83px;font:400 12px/16px 'Liberation Sans', sans-serif;color:#959da5;transform:scaleX(1.0869);transform-origin:0 0;">tutorials/</span>
<span class="t" id="t_f14" style="left:309.5px;top:547.83px;font:400 12px/16px 'Liberation Sans', sans-serif;color:#ffffff;transform:scaleX(1.1038);transform-origin:0 0;">testing-ipython.ipynb</span>
<span class="t" id="t_dhg" style="left:510px;top:112.03px;font:400 12px/16px 'Liberation Sans', sans-serif;color:#959da5;transform:scaleX(1.0913);transform-origin:0 0;">tutorials/</span>
<span class="t" id="t_dh" style="left:559.5px;top:112.03px;font:400 12px/16px 'Liberation Sans', sans-serif;color:#ffffff;transform:scaleX(0.9924);transform-origin:0 0;">README.md</span>
<span class="ln" style="right:910.6px;top:159px">4</span>
<span class="ln" style="right:875.1px;top:159px">4</span>
<span class="ln" style="right:910.6px;top:179px">5</span>
<span class="ln" style="right:875.1px;top:179px">5</span>
<span class="cd" style="left:604.4px;top:179px"><span class="hd">## Available Tutorials</span></span>
<span class="ln" style="right:910.6px;top:199px">6</span>
<span class="ln" style="right:875.1px;top:199px">6</span>
<span class="ln" style="right:875.1px;top:219px">7</span>
<span class="mk" style="left:584.4px;top:219px">+</span>
<span class="cd" style="left:604.4px;top:219px"><span class="bl"><span class="hy">-</span> </span><span class="lk">[01 - VSCode and Anaconda Tutorial]</span><span class="st">(01<span class="hy">-</span>vscode<span class="hy">-</span>anaconda<span class="hy">-</span>tutorial.pdf)</span><span class="bl"> (</span><span class="lk">[QMD version]</span><span class="st">(01<span class="hy">-</span>vscode<span class="hy">-</span>anaconda<span class="hy">-</span>tutorial.qmd)</span><span class="bl">)</span></span>
<span class="ln" style="right:875.1px;top:239px">8</span>
<span class="mk" style="left:584.4px;top:239px">+</span>
<span class="cd" style="left:604.4px;top:239px"><span class="bl"><span class="hy">-</span> </span><span class="lk">[02 - Jupyter Notebook and Markdown Tutorial]</span><span class="st">(02<span class="hy">-</span>jupyter<span class="hy">-</span>markdown<span class="hy">-</span>tutorial.pdf)</span><span class="bl"> (</span><span class="lk">[QMD version]</span><span class="st">(02<span class="hy">-</span>jupyter<span class="hy">-</span>markdown<span class="hy">-</span>tutorial.</span></span>
<span class="cd" style="left:604.4px;top:259px"><span class="st">qmd)</span><span class="bl">)</span></span>
<span class="ln" style="right:910.6px;top:279px">7</span>
<span class="ln" style="right:875.1px;top:279px">9</span>
<span class="cd" style="left:604.4px;top:279px"><span class="bl"><span class="hy">-</span> </span><span class="lk">[GitHub Tutorial 01: Getting Started]</span><span class="st">(github<span class="hy">-</span>tutorial<span class="hy">-</span>01<span class="hy">-</span>getting<span class="hy">-</span>started.pdf)</span><span class="bl"> (</span><span class="lk">[QMD version]</span><span class="st">(github<span class="hy">-</span>tutorial<span class="hy">-</span>01<span class="hy">-</span>getting<span class="hy">-</span>star</span></span>
<span class="cd" style="left:604.4px;top:299px"><span class="st">ted.qmd)</span><span class="bl">)</span></span>
<span class="ln" style="right:910.6px;top:319px">8</span>
<span class="ln" style="right:875.1px;top:319px">10</span>
<span class="cd" style="left:604.4px;top:319px"><span class="bl"><span class="hy">-</span> </span><span class="lk">[GitHub Tutorial 02: Essentials]</span><span class="st">(github<span class="hy">-</span>tutorial<span class="hy">-</span>02<span class="hy">-</span>essentials.pdf)</span><span class="bl"> (</span><span class="lk">[QMD version]</span><span class="st">(github<span class="hy">-</span>tutorial<span class="hy">-</span>02<span class="hy">-</span>essentials.qmd)</span><span class="bl">)</span></span>
<span class="ln" style="right:910.6px;top:339px">9</span>
<span class="ln" style="right:875.1px;top:339px">11</span>
<span class="cd" style="left:604.4px;top:339px"><span class="bl"><span class="hy">-</span> </span><span class="lk">[GitHub Tutorial 03: Updating Lecture Notes]</span><span class="st">(github<span class="hy">-</span>tutorial<span class="hy">-</span>03<span class="hy">-</span>updating<span class="hy">-</span>lecture<span class="hy">-</span>notes.pdf)</span><span class="bl"> (</span><span class="lk">[QMD version]</span><span class="st">(github<span class="hy">-</span>tutorial<span class="hy">-</span>0</span></span>
<span class="cd" style="left:604.4px;top:359px"><span class="st">3<span class="hy">-</span>updating<span class="hy">-</span>lecture<span class="hy">-</span>notes.qmd)</span><span class="bl">)</span></span>
<span class="ln" style="right:910.6px;top:379px">10</span>
<span class="mk" style="left:584.4px;top:379px"><span class="hy">-</span></span>
<span class="cd" style="left:604.4px;top:379px"><span class="bl"><span class="hy">-</span> </span><span class="lk">[Jupyter Notebook Tutorial]</span><span class="st">(jupyter<span class="hy">-</span>notebook<span class="hy">-</span>tutorial.pdf)</span><span class="bl"> (</span><span class="lk">[QMD version]</span><span class="st">(jupyter<span class="hy">-</span>notebook<span class="hy">-</span>tutorial.qmd)</span><span class="bl">)</span></span>
<span class="ln" style="right:910.6px;top:399px">11</span>
<span class="mk" style="left:584.4px;top:399px"><span class="hy">-</span></span>
<span class="cd" style="left:604.4px;top:399px"><span class="bl"><span class="hy">-</span> </span><span class="lk">[VSCode and Anaconda Tutorial]</span><span class="st">(vscode<span class="hy">-</span>anaconda<span class="hy">-</span>tutorial.pdf)</span><span class="bl"> (</span><span class="lk">[QMD version]</span><span class="st">(vscode<span class="hy">-</span>anaconda<span class="hy">-</span>tutorial.qmd)</span><span class="bl">)</span></span>
<span class="ln" style="right:910.6px;top:419px">12</span>
<span class="ln" style="right:875.1px;top:419px">12</span>
<span class="ln" style="right:910.6px;top:439px">13</span>
<span class="ln" style="right:875.1px;top:439px">13</span>
<span class="cd" style="left:604.4px;top:439px"><span class="hd">## File Formats</span></span>
<span class="ln" style="right:910.6px;top:459px">14</span>
<span class="ln" style="right:875.1px;top:459px">14</span>
<span class="cd" style="left:604.4px;top:138px;color:#a3aab2">@@ <span class="hy">-</span>4,11 +4,11 @@ This folder contains several tutorials for the QTM151 course. Below you will fin</span>
</div>
</body></html>
